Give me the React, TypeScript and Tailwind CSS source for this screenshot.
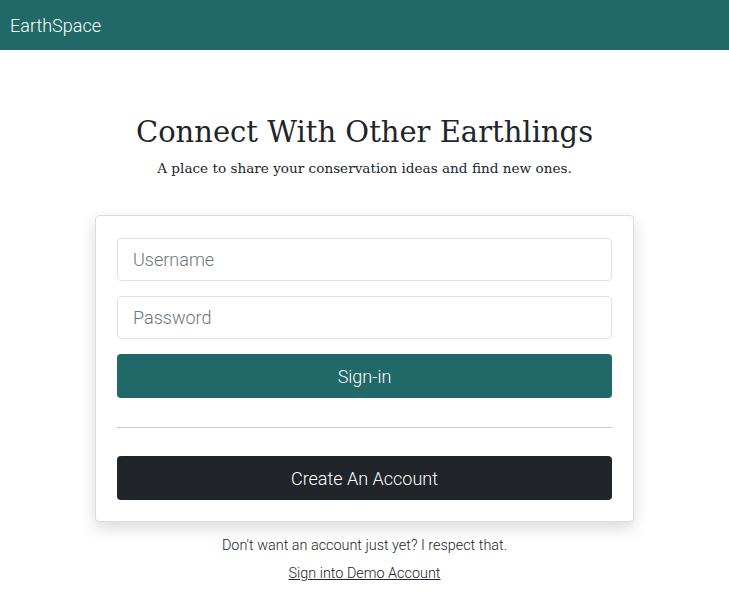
export default function App() {
  return (
    <div className="min-h-screen bg-white font-['Roboto',sans-serif] font-light text-[#212529]">
      <nav className="flex h-[50px] items-center bg-[#206968] px-[10px]">
        <span className="text-[18px] text-white">EarthSpace</span>
      </nav>

      <header className="mt-[63px] text-center font-['DejaVu_Serif',serif] text-[#212529]">
        <h1 className="text-[29px] leading-[38px] font-normal">Connect With Other Earthlings</h1>
        <p className="mt-[7px] text-[13.6px] leading-[20px]">
          A place to share your conservation ideas and find new ones.
        </p>
      </header>

      <section className="mx-auto mt-[37px] w-[539px] rounded-[4px] border border-[#dddddd] bg-white px-[21px] pt-[22px] pb-[21px] shadow-[0_6px_16px_rgba(0,0,0,0.15)]">
        <div className="flex flex-col gap-[15px]">
          <input
            placeholder="Username"
            className="h-[43px] w-full rounded-[4px] border border-[#dee2e6] px-[15px] text-[18px] font-light placeholder:text-[#6c757d] outline-none"
          />
          <input
            type="password"
            placeholder="Password"
            className="h-[43px] w-full rounded-[4px] border border-[#dee2e6] px-[15px] text-[18px] font-light placeholder:text-[#6c757d] outline-none"
          />
          <button className="h-[44px] w-full rounded-[4px] bg-[#206968] text-[18px] font-light text-white">
            Sign-in
          </button>
        </div>
        <hr className="mt-[29px] mb-[28px] border-t border-[#c8c8c8]" />
        <button className="h-[44px] w-full rounded-[4px] bg-[#212529] text-[18px] font-light text-white">
          Create An Account
        </button>
      </section>

      <div className="mt-[14px] text-center text-[14.4px] text-[#212529]">
        <p className="leading-[20px]">Don't want an account just yet? I respect that.</p>
        <a href="#" className="mt-[8px] inline-block leading-[20px] underline">
          Sign into Demo Account
        </a>
      </div>
    </div>
  );
}
